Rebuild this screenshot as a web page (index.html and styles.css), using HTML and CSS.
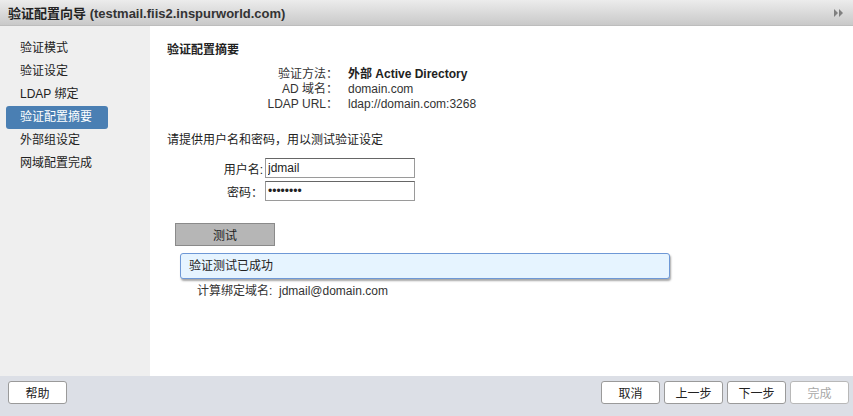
FILE: index.html
```html
<!DOCTYPE html>
<html lang="zh">
<head>
<meta charset="utf-8">
<link rel="stylesheet" href="styles.css">
</head>
<body>
<div class="app">
  <div class="titlebar">
    <span class="title"><b class="cn">验证配置向导</b> (testmail.fiis2.inspurworld.com)</span>
    <svg class="expand" width="10" height="8" viewBox="0 0 10 8"><polygon points="0,0 4,4 0,8" fill="#808080"/><polygon points="5,0 9,4 5,8" fill="#808080"/></svg>
  </div>
  <div class="middle">
    <nav class="sidebar">
      <div class="step">验证模式</div>
      <div class="step">验证设定</div>
      <div class="step">LDAP 绑定</div>
      <div class="step active">验证配置摘要</div>
      <div class="step">外部组设定</div>
      <div class="step">网域配置完成</div>
    </nav>
    <main class="content">
      <h1 class="heading">验证配置摘要</h1>
      <div class="summary">
        <span class="lbl">验证方法：</span><span class="val"><b>外部 Active Directory</b></span>
        <span class="lbl">AD 域名：</span><span class="val">domain.com</span>
        <span class="lbl">LDAP URL：</span><span class="val">ldap://domain.com:3268</span>
      </div>
      <p class="prompt">请提供用户名和密码，用以测试验证设定</p>
      <div class="form">
        <label class="flbl">用户名:</label><input class="field" type="text" value="jdmail">
        <label class="flbl">密码：</label><input class="field" type="password" value="jdmail12">
      </div>
      <button class="testbtn">测试</button>
      <div class="success">验证测试已成功</div>
      <div class="result">计算绑定域名:&nbsp; jdmail@domain.com</div>
    </main>
  </div>
  <footer class="footer">
    <button class="btn">帮助</button>
    <div class="right">
      <button class="btn">取消</button>
      <button class="btn">上一步</button>
      <button class="btn">下一步</button>
      <button class="btn disabled">完成</button>
    </div>
  </footer>
</div>
</body>
</html>
```
FILE: styles.css
```css
* { box-sizing: border-box; }
html, body { margin: 0; padding: 0; }
body {
  font-family: "Liberation Sans", "Noto Sans CJK SC", sans-serif;
  font-size: 12px;
  color: #222;
  background: #fff;
}
.app { width: 853px; height: 416px; display: flex; flex-direction: column; }
.titlebar {
  height: 26px;
  flex: none;
  display: flex;
  align-items: center;
  justify-content: space-between;
  padding: 0 9px 0 8px;
  background: linear-gradient(#ececec, #c9c9c9);
  border-bottom: 1px solid #bdbdbd;
}
.title { font-size: 13px; font-weight: bold; color: #333; }
.title b { font-weight: bold; color: #222; }
.middle { flex: 1; display: flex; min-height: 0; }
.sidebar {
  width: 150px;
  flex: none;
  background: #efefef;
  padding: 11px 0 0 6px;
}
.step {
  width: 102px;
  height: 23px;
  line-height: 23px;
  padding-left: 14px;
  font-size: 12px;
  color: #222;
  border-radius: 3px;
}
.step.active { background: #4a7fb3; color: #fff; }
.content { flex: 1; padding: 16px 0 0 17px; }
.heading { margin: 0; font-size: 12px; font-weight: bold; line-height: 16px; color: #222; }
.summary {
  display: grid;
  grid-template-columns: 171px auto;
  column-gap: 10px;
  margin-top: 9px;
  line-height: 15px;
  width: max-content;
}
.lbl { text-align: right; color: #333; }
.val { color: #333; }
.val b { color: #222; }
.prompt { margin: 20px 0 0; line-height: 16px; color: #222; }
.form {
  display: grid;
  grid-template-columns: 96px 150px;
  column-gap: 2px;
  row-gap: 3px;
  margin-top: 10px;
  align-items: center;
}
.flbl { text-align: right; color: #222; }
.field {
  width: 150px;
  height: 20px;
  border: 1px solid #9a9a9a;
  border-top-color: #666;
  padding: 0 2px;
  font-family: "Liberation Sans", sans-serif;
  font-size: 12px;
  color: #222;
  background: #fff;
  outline: none;
}
.testbtn {
  display: block;
  margin: 22px 0 0 8px;
  width: 100px;
  height: 23px;
  background: #b6b6b6;
  border: 1px solid #8a8a8a;
  font-family: inherit;
  font-size: 12px;
  color: #222;
  padding: 0;
}
.success {
  margin: 7px 0 0 13px;
  width: 490px;
  height: 26px;
  line-height: 24px;
  padding-left: 8px;
  background: #e6f4ff;
  border: 1px solid #6e98d6;
  border-radius: 3px;
  box-shadow: 1px 2px 2px rgba(0,0,0,0.35);
  color: #222;
}
.result { margin: 5px 0 0 30px; line-height: 15px; color: #333; }
.footer {
  height: 40px;
  flex: none;
  background: #dcdfe6;
  display: flex;
  justify-content: space-between;
  align-items: flex-start;
  padding: 5px 4px 0 8px;
}
.right { display: flex; gap: 4px; }
.btn {
  width: 59px;
  height: 23px;
  background: #fff;
  border: 1px solid #9a9a9a;
  border-radius: 3px;
  font-family: inherit;
  font-size: 12px;
  color: #222;
  padding: 0;
}
.btn.disabled { color: #a8a8a8; border-color: #b8b8b8; }
```
